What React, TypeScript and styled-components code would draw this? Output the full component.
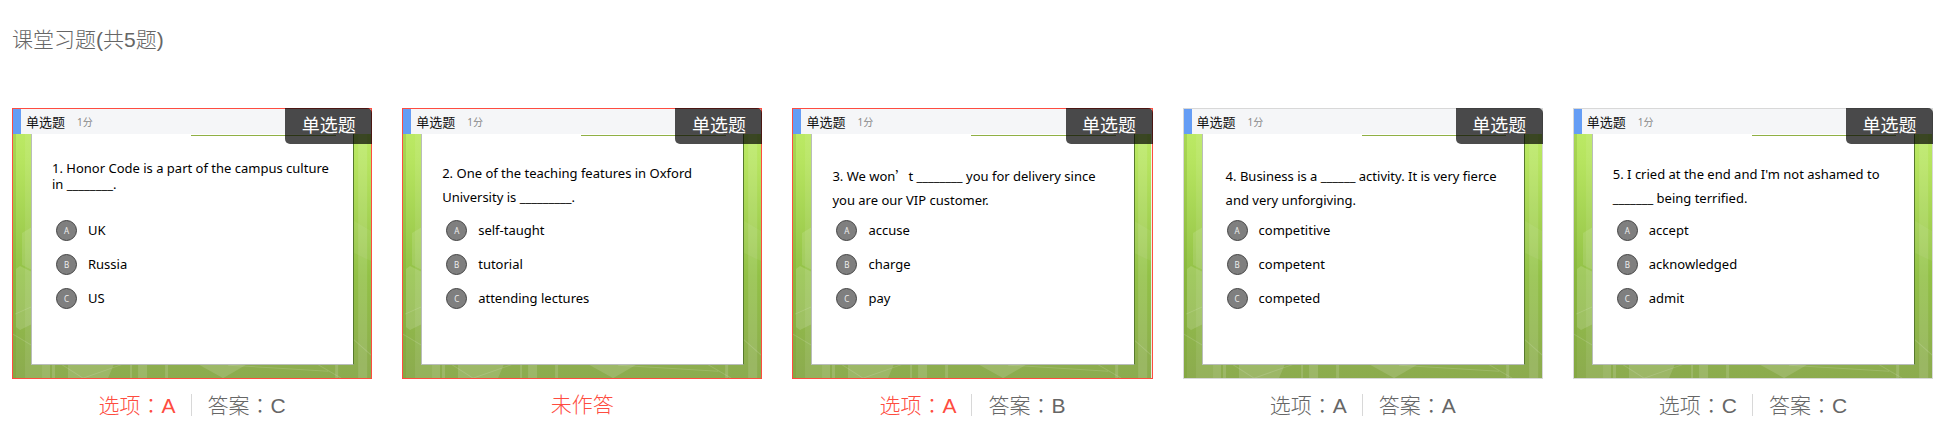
import React from "react";
import styled, { createGlobalStyle, css } from "styled-components";

const GlobalStyle = createGlobalStyle`
  * { box-sizing: border-box; }
  body { margin: 0; background: #fff; }
`;

const Page = styled.main`
  padding: 28px 21px 32px 12px;
  color: #666;
  font-family: "Liberation Sans", "Noto Sans CJK SC", sans-serif;
  font-weight: 300;
`;

const Title = styled.h1`
  margin: 0 0 56px;
  font-size: 21px;
  font-weight: 300;
  line-height: 24px;
`;

const CardGrid = styled.ul`
  display: grid;
  grid-template-columns: repeat(5, minmax(0, 1fr));
  gap: 30px;
  margin: 0;
  padding: 0;
  list-style: none;
`;

const Slide = styled.article<{ $wrong: boolean }>`
  position: relative;
  aspect-ratio: 360 / 271;
  width: 100%;
  display: flex;
  flex-direction: column;
  border: 1px solid ${(p) => (p.$wrong ? "#fe4c40" : "#d8d8d8")};
  isolation: isolate;
`;

const Backdrop = styled.svg`
  position: absolute;
  inset: 0;
  width: 100%;
  height: 100%;
  z-index: -1;
`;

const SlideHeader = styled.header`
  display: flex;
  align-items: center;
  gap: 12px;
  height: 25px;
  padding-left: 5px;
  border-left: 8px solid #659df5;
  background: #f5f6f8;
  font-family: "Noto Sans", "Noto Sans CJK SC", sans-serif;
  font-weight: 400;
`;

const SlideKind = styled.span`
  color: #111;
  font-size: 13px;
  line-height: 20px;
`;

const Score = styled.span`
  color: #888;
  font-size: 10px;
  line-height: 20px;
`;

const Badge = styled.span`
  position: absolute;
  top: -1px;
  right: -1px;
  width: 87px;
  height: 36px;
  border-radius: 0 5px 0 5px;
  background: rgba(0, 0, 0, 0.7);
  color: #fff;
  font-size: 18px;
  font-weight: 400;
  line-height: 36px;
  text-align: center;
`;

const Sheet = styled.div`
  flex: 1;
  display: flex;
  flex-direction: column;
  margin: 0 17px 13px 18px;
  border: solid #b9bdbb;
  border-width: 0 1px 1px;
  border-right-color: #567a2c;
  background: #fff;
  color: #000;
  font-family: "Noto Sans", "Noto Sans CJK SC", sans-serif;
  font-size: 13px;
  font-weight: 400;
`;

const TopRule = styled.div`
  width: 45%;
  height: 2px;
  margin-left: 159px;
  border-bottom: 1px solid #8fb044;
`;

const Prompt = styled.p<{ $top: number; $left: number; $tight?: boolean }>`
  height: 84px;
  margin: 0;
  padding: ${(p) => p.$top}px 0 0 ${(p) => p.$left}px;
  white-space: nowrap;
  line-height: 24px;
  ${(p) =>
    p.$tight &&
    css`
      line-height: 16px;
    `}
`;

const Line = styled.span`
  display: block;
`;

const WideQuote = styled.span`
  font-family: "Noto Sans CJK SC", sans-serif;
`;

const Options = styled.ol`
  display: flex;
  flex-direction: column;
  gap: 13px;
  margin: 0;
  padding: 0 0 0 24px;
  list-style: none;
`;

const Option = styled.li`
  display: flex;
  align-items: center;
  gap: 11px;
  height: 21px;
  line-height: 21px;
`;

const Letter = styled.span`
  width: 21px;
  height: 21px;
  border: 1px solid #444;
  border-radius: 50%;
  background: #7f7f7f;
  color: #eee;
  font-size: 8px;
  line-height: 19px;
  text-align: center;
`;

const Caption = styled.p`
  display: flex;
  justify-content: center;
  margin: 15px 0 0;
  font-size: 21px;
  line-height: 21px;
`;

const Result = styled.span<{ $wrong?: boolean }>`
  color: ${(p) => (p.$wrong ? "#fe4c40" : "#666")};
  & + & {
    margin-left: 15px;
    padding-left: 16px;
    border-left: 1px solid #d8d8d8;
  }
`;

const Colon = styled.span`
  font-family: "Noto Sans CJK TC", sans-serif;
`;

type Question = {
  lines: React.ReactNode[];
  options: string[];
  top: number;
  left: number;
  tight?: boolean;
  chosen?: string;
  answer: string;
};

const questions: Question[] = [
  {
    lines: ["1. Honor Code is a part of the campus culture", "in ________."],
    options: ["UK", "Russia", "US"],
    top: 24, left: 20, tight: true, chosen: "A", answer: "C",
  },
  {
    lines: ["2. One of the teaching features in Oxford", "University is _________."],
    options: ["self-taught", "tutorial", "attending lectures"],
    top: 25, left: 20, answer: "A",
  },
  {
    lines: [
      <>3. We won<WideQuote>’</WideQuote>t ________ you for delivery since</>,
      "you are our VIP customer.",
    ],
    options: ["accuse", "charge", "pay"],
    top: 28, left: 20, chosen: "A", answer: "B",
  },
  {
    lines: ["4. Business is a ______ activity. It is very fierce", "and very unforgiving."],
    options: ["competitive", "competent", "competed"],
    top: 28, left: 23, chosen: "A", answer: "A",
  },
  {
    lines: ["5. I cried at the end and I'm not ashamed to", "_______ being terrified."],
    options: ["accept", "acknowledged", "admit"],
    top: 26, left: 20, chosen: "C", answer: "C",
  },
];

function SlideBackdrop({ id }: { id: string }) {
  return (
    <Backdrop viewBox="0 0 358 269" preserveAspectRatio="none" aria-hidden="true">
      <defs>
        <linearGradient id={id} x1="0" y1="0" x2="0" y2="1">
          <stop offset="0" stopColor="#bfee68" />
          <stop offset="0.2" stopColor="#b6e45f" />
          <stop offset="0.62" stopColor="#92c146" />
          <stop offset="1" stopColor="#8cab4f" />
        </linearGradient>
      </defs>
      <rect width="358" height="269" fill={`url(#${id})`} />
      <rect width="3" height="269" fill="#6f9c22" opacity="0.25" />
      <rect x="12" width="17" height="269" fill="#fff" opacity="0.08" />
      <rect x="345" width="9" height="269" fill="#fff" opacity="0.12" />
      <path d="M3 160l4-3 12 6v52l-12 6-4-3z" fill="#fff" opacity="0.14" />
      <path d="M9 124l10-6v43l-10-5z" fill="#fff" opacity="0.12" />
      <path d="M341 112l17 10v30l-17-8z" fill="#fff" opacity="0.06" />
      <path
        d="M29 250h8v19h-8zM39 250h3v19h-3zM55 250h3v19h-3zM58 250h45l-8 19H58zM125 250h9v19h-9zM117 250h2v19h-2zM152 250h3v19h-3zM322 250h3v19h-3z"
        fill="#fff"
        opacity="0.14"
      />
      <path d="M185 255h49l-24 14z" fill="#fff" opacity="0.14" />
      <path
        d="M0 225l20 12 50 32M70 269l40-14M2 205l18-8M215 256l100 6M304 255l24 14M340 230l18 16"
        stroke="#fff"
        opacity="0.14"
        fill="none"
      />
    </Backdrop>
  );
}

function QuestionCard({ question, index }: { question: Question; index: number }) {
  const wrong = question.chosen !== question.answer;
  return (
    <li>
      <Slide $wrong={wrong}>
        <SlideBackdrop id={`leaf-${index}`} />
        <SlideHeader>
          <SlideKind>单选题</SlideKind>
          <Score>1分</Score>
        </SlideHeader>
        <Sheet>
          <TopRule />
          <Prompt $top={question.top} $left={question.left} $tight={question.tight}>
            {question.lines.map((line, i) => (
              <Line key={i}>{line}</Line>
            ))}
          </Prompt>
          <Options>
            {question.options.map((text, i) => (
              <Option key={text}>
                <Letter>{"ABC"[i]}</Letter>
                {text}
              </Option>
            ))}
          </Options>
        </Sheet>
        <Badge>单选题</Badge>
      </Slide>
      <Caption>
        {question.chosen ? (
          <>
            <Result $wrong={wrong}>
              选项<Colon>：</Colon>{question.chosen}
            </Result>
            <Result>
              答案<Colon>：</Colon>{question.answer}
            </Result>
          </>
        ) : (
          <Result $wrong>未作答</Result>
        )}
      </Caption>
    </li>
  );
}

export default function App() {
  return (
    <>
      <GlobalStyle />
      <Page>
        <Title>课堂习题(共5题)</Title>
        <CardGrid>
          {questions.map((question, index) => (
            <QuestionCard key={index} question={question} index={index} />
          ))}
        </CardGrid>
      </Page>
    </>
  );
}
